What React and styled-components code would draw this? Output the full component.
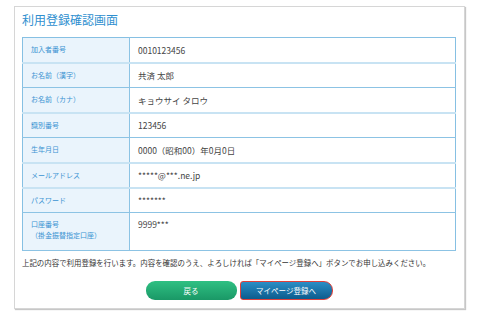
import React from "react";
import styled, { createGlobalStyle } from "styled-components";

const GlobalStyles = createGlobalStyle`
  html, body {
    margin: 0;
    padding: 0;
    background: #ffffff;
  }
  body {
    font-family: "Noto Sans CJK JP", "Noto Sans", sans-serif;
  }
`;

const Page = styled.div`
  width: 480px;
  height: 315px;
  padding: 6px 15px 0 14px;
  box-sizing: border-box;
`;

const Card = styled.div`
  width: 451px;
  height: 303px;
  box-sizing: border-box;
  border: 1px solid #d6d6d6;
  box-shadow: 1px 1px 1px rgba(0, 0, 0, 0.22);
  padding: 0 9px 0 7px;
  background: #fff;
`;

const Title = styled.h1`
  margin: 0;
  height: 30px;
  padding-top: 5px;
  box-sizing: border-box;
  font-size: 12px;
  line-height: 16px;
  font-weight: 400;
  color: #2f8fcf;
`;

const Table = styled.table`
  width: 434px;
  border-collapse: collapse;
  border: 1px solid #86c0e3;
`;

const Row = styled.tr`
  border-bottom: ${(p) => (p.$light ? "2px solid #c8e3f3" : "1px solid #8cc3e4")};
`;

const Label = styled.th`
  width: 107px;
  height: ${(p) => (p.$tall ? "38px" : "25px")};
  box-sizing: border-box;
  padding: ${(p) => (p.$tall ? "6px 0 0 8px" : "0 0 0 8px")};
  vertical-align: ${(p) => (p.$tall ? "top" : "middle")};
  background: #eaf4fc;
  border-right: 1px solid #8cc3e4;
  text-align: left;
  font-size: 7px;
  line-height: 11px;
  font-weight: 400;
  color: #3a93d2;
`;

const Value = styled.td`
  padding: ${(p) => (p.$tall ? "5px 0 0 8px" : "0 0 0 8px")};
  vertical-align: ${(p) => (p.$tall ? "top" : "middle")};
  font-size: 8.5px;
  line-height: 12px;
  color: #444;
`;

const Note = styled.p`
  margin: 0;
  padding-top: 7px;
  font-size: 7.45px;
  line-height: 10px;
  color: #333;
  white-space: nowrap;
`;

const Actions = styled.div`
  display: flex;
  justify-content: center;
  gap: 3px;
  margin-top: 13px;
  padding-left: 1px;
`;

const Button = styled.button`
  height: 19px;
  width: ${(p) => (p.$primary ? "93px" : "91px")};
  box-sizing: border-box;
  font-family: inherit;
  font-size: 7.5px;
  color: #fff;
  cursor: pointer;
  border: ${(p) => (p.$primary ? "1.5px solid #e0403a" : "none")};
  border-radius: ${(p) => (p.$primary ? "3px 9px 9px 3px" : "9px")};
  background: ${(p) =>
    p.$primary
      ? "linear-gradient(#2b8ec6, #0c5c8d)"
      : "linear-gradient(#2fc083, #1a9866)"};
  padding: 0;
`;

const rows = [
  { label: "加入者番号", value: "0010123456", light: true },
  { label: "お名前（漢字）", value: "共済 太郎" },
  { label: "お名前（カナ）", value: "キョウサイ タロウ", light: true },
  { label: "識別番号", value: "123456" },
  { label: "生年月日", value: "0000（昭和00）年0月0日", light: true },
  { label: "メールアドレス", value: "*****@***.ne.jp", light: true },
  { label: "パスワード", value: "*******" },
];

export default function App() {
  return (
    <>
      <GlobalStyles />
      <Page>
        <Card>
          <Title>利用登録確認画面</Title>
          <Table>
            <tbody>
              {rows.map((r) => (
                <Row key={r.label} $light={r.light}>
                  <Label>{r.label}</Label>
                  <Value>{r.value}</Value>
                </Row>
              ))}
              <Row>
                <Label $tall>
                  口座番号
                  <br />
                  （掛金振替指定口座）
                </Label>
                <Value $tall>9999***</Value>
              </Row>
            </tbody>
          </Table>
          <Note>
            上記の内容で利用登録を行います。内容を確認のうえ、よろしければ「マイページ登録へ」ボタンでお申し込みください。
          </Note>
          <Actions>
            <Button>戻る</Button>
            <Button $primary>マイページ登録へ</Button>
          </Actions>
        </Card>
      </Page>
    </>
  );
}
